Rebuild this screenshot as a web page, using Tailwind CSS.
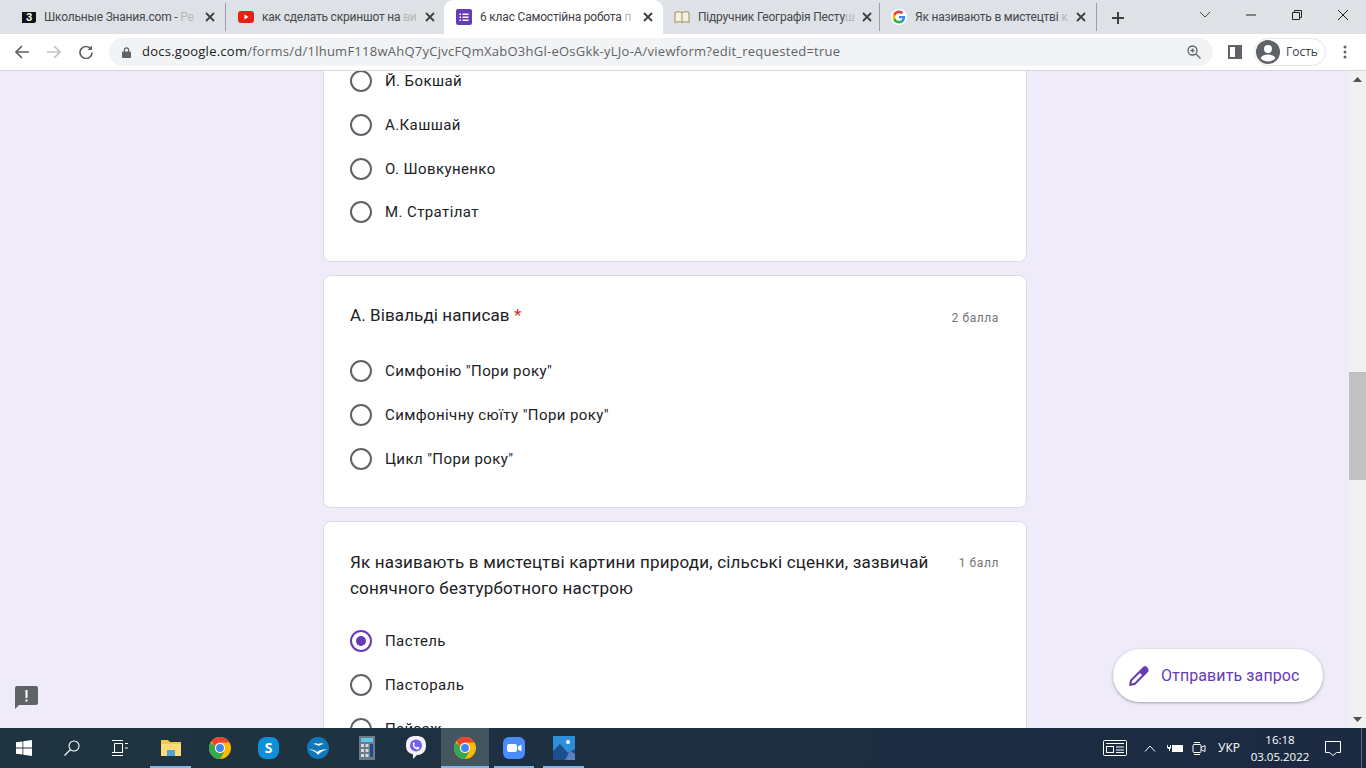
<!DOCTYPE html>
<html lang="uk">
  <head>
    <meta charset="UTF-8" />
    <meta name="viewport" content="width=device-width, initial-scale=1.0" />
    <title>6 клас Самостійна робота</title>
    <script src="https://cdn.jsdelivr.net/npm/@tailwindcss/browser@4"></script>
  </head>
  <body class="h-screen overflow-hidden flex flex-col font-['Roboto',sans-serif] bg-[#f0ebf8]">
    <!-- tab strip -->
    <header class="h-[34px] shrink-0 bg-[#dee1e6] flex items-end pl-[9px] font-['Roboto',sans-serif] text-[12px] tracking-[-0.2px] text-[#45484c]">
      <div class="w-[217px] h-[28px] mb-[3px] flex items-center pl-[12px] pr-[10px] border-r border-[#9aa0a6]">
        <svg class="w-4 h-4 shrink-0" viewBox="0 0 16 16"><path d="M1 3h14v9.500l-1.500 1.500H1z" fill="#111"/><text x="8" y="12" text-anchor="middle" font-size="10" font-weight="700" fill="#fff" font-family="Liberation Sans">З</text></svg>
        <span class="ml-[7px] flex-1 whitespace-nowrap">Школьные Знания.com - <span class="text-[#b4b6ba]">Ре</span></span>
        <svg class="w-[10px] h-[10px] ml-2 shrink-0" viewBox="0 0 10 10" stroke="#3c4043" stroke-width="1.800"><path d="M1 1l8 8M9 1l-8 8"/></svg>
      </div>
      <div class="w-[218px] h-[28px] mb-[3px] flex items-center pl-[12px] pr-[10px] border-r border-transparent">
        <svg class="w-4 h-[12px] shrink-0" viewBox="0 0 16 12"><rect width="16" height="12" rx="3" fill="#e62117"/><path d="M6.500 3.500l4 2.500-4 2.500z" fill="#fff"/></svg>
        <span class="ml-[8px] flex-1 whitespace-nowrap">как сделать скриншот на <span class="text-[#b4b6ba]">ви</span></span>
        <svg class="w-[10px] h-[10px] ml-2 shrink-0" viewBox="0 0 10 10" stroke="#3c4043" stroke-width="1.800"><path d="M1 1l8 8M9 1l-8 8"/></svg>
      </div>
      <div class="w-[219px] h-[34px] bg-white rounded-t-[9px] flex items-center pl-[12px] pr-[10px] text-[#3c4043]">
        <svg class="w-4 h-4 shrink-0" viewBox="0 0 16 16"><rect width="16" height="16" rx="2" fill="#673ab7"/><path d="M3.500 4.500h1.500v1.500H3.500zM6.500 4.500h6v1.500h-6zM3.500 7.500h1.500v1.500H3.500zM6.500 7.500h6v1.500h-6zM3.500 10.500h1.500v1.500H3.500zM6.500 10.500h6v1.500h-6z" fill="#fff"/></svg>
        <span class="ml-[8px] flex-1 whitespace-nowrap">6 клас Самостійна робота <span class="text-[#b4b6ba]">п</span></span>
        <svg class="w-[10px] h-[10px] ml-2 shrink-0" viewBox="0 0 10 10" stroke="#3c4043" stroke-width="1.800"><path d="M1 1l8 8M9 1l-8 8"/></svg>
      </div>
      <div class="w-[217px] h-[28px] mb-[3px] flex items-center pl-[11px] pr-[10px] border-r border-[#9aa0a6]">
        <svg class="w-4 h-4 shrink-0" viewBox="0 0 16 16" fill="#f5f0e0" stroke="#a08c5a"><path d="M1 3.500c2-1 5-1 7 0 2-1 5-1 7 0v10c-2-1-5-1-7 0-2-1-5-1-7 0zM8 3.500v10"/></svg>
        <span class="ml-[8px] flex-1 whitespace-nowrap">Підручник Географія Песту<span class="text-[#b4b6ba]">ш</span></span>
        <svg class="w-[10px] h-[10px] ml-2 shrink-0" viewBox="0 0 10 10" stroke="#3c4043" stroke-width="1.800"><path d="M1 1l8 8M9 1l-8 8"/></svg>
      </div>
      <div class="w-[217px] h-[28px] mb-[3px] flex items-center pl-[11px] pr-[10px] border-r border-[#9aa0a6]">
        <svg class="w-4 h-4 shrink-0" viewBox="-2 -2 20 20"><circle cx="8" cy="8" r="10" fill="#fff"/><path d="M15.700 8.200c0-.6 0-1.100-.1-1.600H8v3h4.400c-.2 1-.8 1.900-1.600 2.400v2h2.600c1.500-1.400 2.300-3.400 2.300-5.800z" fill="#4285f4"/><path d="M8 16c2.200 0 4-.7 5.400-2l-2.600-2c-.7.500-1.700.8-2.800.8-2.100 0-3.900-1.400-4.500-3.300H.8v2.100C2.100 14.200 4.900 16 8 16z" fill="#34a853"/><path d="M3.500 9.500c-.3-1-.3-2 0-3V4.400H.8c-1.100 2.200-1.100 5 0 7.200z" fill="#fbbc05"/><path d="M8 3.200c1.200 0 2.300.4 3.100 1.200l2.300-2.300C12 .8 10.100 0 8 0 4.900 0 2.100 1.800.8 4.400l2.700 2.100C4.100 4.600 5.900 3.200 8 3.200z" fill="#ea4335"/></svg>
        <span class="ml-[8px] flex-1 whitespace-nowrap">Як називають в мистецтві <span class="text-[#b4b6ba]">к</span></span>
        <svg class="w-[10px] h-[10px] ml-2 shrink-0" viewBox="0 0 10 10" stroke="#3c4043" stroke-width="1.800"><path d="M1 1l8 8M9 1l-8 8"/></svg>
      </div>
      <svg class="w-[12px] h-[12px] ml-[15px] mb-[10px] shrink-0" viewBox="0 0 12 12" stroke="#3c4043" stroke-width="2"><path d="M6 0v12M0 6h12"/></svg>
      <div class="ml-auto flex self-start h-[30px] items-center text-[#222]">
        <svg class="w-[46px] h-[12px]" viewBox="0 0 46 12" fill="none" stroke="#444"><path d="M18 3l5 5 5-5"/></svg>
        <svg class="w-[46px] h-[12px]" viewBox="0 0 46 12" fill="none" stroke="#222"><path d="M18 6h10"/></svg>
        <svg class="w-[46px] h-[12px]" viewBox="0 0 46 12" fill="none" stroke="#222"><path d="M18.500 3.500h7v7h-7zM20.500 3.500v-2h7v7h-2"/></svg>
        <svg class="w-[46px] h-[12px]" viewBox="0 0 46 12" fill="none" stroke="#222"><path d="M18 1l10 10M28 1L18 11"/></svg>
      </div>
    </header>

    <!-- toolbar -->
    <nav class="h-[37px] shrink-0 bg-white border-b border-[#d4d6d9] flex items-center font-['Open_Sans',sans-serif]">
      <div class="w-[109px] flex items-center shrink-0 pl-[15px] gap-[18px]">
        <svg class="w-[14px] h-[14px]" viewBox="0 0 14 14" fill="none" stroke="#5f6368" stroke-width="1.700"><path d="M14 7H1.500M7 1L1 7l6 6"/></svg>
        <svg class="w-[14px] h-[14px]" viewBox="0 0 14 14" fill="none" stroke="#bdc1c6" stroke-width="1.700"><path d="M0 7h12.500M7 1l6 6-6 6"/></svg>
        <svg class="w-[14px] h-[14px]" viewBox="0 0 14 14" fill="none" stroke="#5f6368" stroke-width="1.700"><path d="M12 4.200A6 6 0 1 0 13 7.500"/><path d="M13 0.500v4.500H8.500" fill="#5f6368" stroke="none"/></svg>
      </div>
      <div class="w-[1104px] h-[28px] rounded-full bg-[#f1f3f4] flex items-center pl-[13px] pr-[12px]">
        <svg class="w-[9px] h-[11px] shrink-0" viewBox="0 0 9 11" fill="#5f6368"><path d="M1 4.500h.8V3a2.700 2.700 0 0 1 5.400 0v1.500H8a1 1 0 0 1 1 1V10a1 1 0 0 1-1 1H1a1 1 0 0 1-1-1V5.500a1 1 0 0 1 1-1zm2-1.500v1.500h3V3a1.500 1.500 0 0 0-3 0z"/></svg>
        <span class="ml-[11px] text-[13px] tracking-[0.25px] text-[#5f6368] whitespace-nowrap"><span class="text-[#202124]">docs.google.com</span>/forms/d/1lhumF118wAhQ7yCjvcFQmXabO3hGl-eOsGkk-yLJo-A/viewform?edit_requested=true</span>
        <svg class="w-[14px] h-[14px] ml-auto" viewBox="0 0 14 14" fill="none" stroke="#5f6368" stroke-width="1.300"><circle cx="5.500" cy="5.500" r="4.500"/><path d="M9 9l4.500 4.500M3.500 5.500h4M5.500 3.500v4"/></svg>
      </div>
      <svg class="w-[14px] h-[14px] ml-[15px] shrink-0" viewBox="0 0 14 14"><path d="M0 0h14v14H0z" fill="#5f6368"/><path d="M2 2h5v10H2z" fill="#fff"/></svg>
      <div class="ml-[12px] w-[72px] h-[28px] rounded-full border border-[#e4e6e8] flex items-center pl-[1px] shrink-0">
        <svg class="w-[24px] h-[24px]" viewBox="0 0 24 24"><circle cx="12" cy="12" r="12" fill="#5f6368"/><circle cx="12" cy="9" r="4" fill="#fff"/><path d="M4.500 18c1.500-2.500 4.500-3.500 7.500-3.500s6 1 7.500 3.500c-1.800 2.200-4.500 3.500-7.500 3.500S6.300 20.200 4.500 18z" fill="#fff"/></svg>
        <span class="ml-[6px] text-[12px] text-[#3c4043]">Гость</span>
      </div>
      <svg class="w-[4px] h-[14px] ml-[17px] shrink-0" viewBox="0 0 4 14" fill="#5f6368"><circle cx="2" cy="2" r="1.500"/><circle cx="2" cy="7" r="1.500"/><circle cx="2" cy="12" r="1.500"/></svg>
    </nav>

    <!-- page -->
    <div class="relative flex-1 min-h-0 flex overflow-hidden">
      <main class="flex-1 overflow-hidden flex flex-col items-center pl-[1px] text-[#202124]">
        <section class="w-[704px] shrink-0 bg-white border border-[#dadce0] rounded-b-[8px] -mt-[13px] pl-[26px] pb-[28px] text-[15px] tracking-[0.4px]">
          <div class="h-[44px] flex items-center gap-[13px]"><span class="w-[22px] h-[22px] rounded-full border-2 border-[#5f6368]"></span>Й. Бокшай</div>
          <div class="h-[44px] flex items-center gap-[13px]"><span class="w-[22px] h-[22px] rounded-full border-2 border-[#5f6368]"></span>А.Кашшай</div>
          <div class="h-[44px] flex items-center gap-[13px]"><span class="w-[22px] h-[22px] rounded-full border-2 border-[#5f6368]"></span>О. Шовкуненко</div>
          <div class="h-[42px] flex items-center gap-[13px]"><span class="w-[22px] h-[22px] rounded-full border-2 border-[#5f6368]"></span>М. Стратілат</div>
        </section>

        <section class="w-[704px] shrink-0 mt-[13px] bg-white border border-[#dadce0] rounded-[8px] px-[26px] pt-[27px] pb-[26px]">
          <div class="flex justify-between items-center h-[26px] mb-[20px]">
            <h2 class="text-[17px] tracking-[0.1px]">А. Вівальді написав <span class="text-[#d93025]">*</span></h2>
            <span class="text-[12px] tracking-[0.6px] text-[#70757a] mt-[3px] mr-[1px]">2 балла</span>
          </div>
          <div class="text-[15px] tracking-[0.4px]">
            <div class="h-[44px] flex items-center gap-[13px]"><span class="w-[22px] h-[22px] rounded-full border-2 border-[#5f6368]"></span>Симфонію "Пори року"</div>
            <div class="h-[44px] flex items-center gap-[13px]"><span class="w-[22px] h-[22px] rounded-full border-2 border-[#5f6368]"></span>Симфонічну сюїту "Пори року"</div>
            <div class="h-[44px] flex items-center gap-[13px]"><span class="w-[22px] h-[22px] rounded-full border-2 border-[#5f6368]"></span>Цикл "Пори року"</div>
          </div>
        </section>

        <section class="w-[704px] shrink-0 mt-[13px] bg-white border border-[#dadce0] rounded-[8px] px-[26px] pt-[27px] pb-[26px]">
          <div class="flex justify-between items-start mb-[18px]">
            <h2 class="w-[590px] text-[17px] leading-[26px] tracking-[0.2px]">Як називають в мистецтві картини природи, сільські сценки, зазвичай сонячного безтурботного настрою</h2>
            <span class="text-[12px] leading-[26px] tracking-[0.6px] text-[#70757a] mt-[1px] mr-[1px]">1 балл</span>
          </div>
          <div class="text-[15px] tracking-[0.4px]">
            <div class="h-[44px] flex items-center gap-[13px]"><span class="w-[22px] h-[22px] rounded-full border-2 border-[#673ab7] flex items-center justify-center"><span class="w-[10px] h-[10px] rounded-full bg-[#673ab7]"></span></span>Пастель</div>
            <div class="h-[44px] flex items-center gap-[13px]"><span class="w-[22px] h-[22px] rounded-full border-2 border-[#5f6368]"></span>Пастораль</div>
            <div class="h-[44px] flex items-center gap-[13px]"><span class="w-[22px] h-[22px] rounded-full border-2 border-[#5f6368]"></span>Пейзаж</div>
          </div>
        </section>
      </main>

      <!-- scrollbar -->
      <aside class="w-[17px] shrink-0 bg-[#f1f1f1] flex flex-col items-center">
        <svg class="w-[9px] h-[5px] mt-[6px] shrink-0" viewBox="0 0 9 5" fill="#505050"><path d="M4.500 0l4.500 5H0z"/></svg>
        <div class="w-full h-[108px] mt-[290px] bg-[#c1c1c1] shrink-0"></div>
        <svg class="w-[9px] h-[5px] mt-auto mb-[6px] shrink-0" viewBox="0 0 9 5" fill="#505050"><path d="M0 0h9L4.500 5z"/></svg>
      </aside>

      <!-- report button and floating action -->
      <svg class="absolute left-[15px] top-[615px] w-[23px] h-[23px]" viewBox="0 0 23 23" fill="#5f6368"><path d="M2 0h19a2 2 0 0 1 2 2v15a2 2 0 0 1-2 2H4l-4 4V2a2 2 0 0 1 2-2z"/><path d="M10.500 4h2v8h-2zM10.500 13.500h2v2h-2z" fill="#fff"/></svg>
      <button class="absolute left-[1113px] top-[578px] w-[210px] h-[53px] rounded-full bg-white shadow-[0_1px_3px_rgba(60,64,67,0.45)] flex items-center pl-[16px] text-[#673ab7]">
        <svg class="w-[20px] h-[20px] shrink-0" viewBox="0 0 20 20"><path d="M0 20l1-6L13.500 1.500c1.500-2 3.500-2 5 0s1.500 3.500 0 5L6 19z" fill="#673ab7"/><path d="M2.500 17.500l.6-2.800L11 7l2 2-7.500 7.800z" fill="#fff"/></svg>
        <span class="ml-[12px] text-[16px] tracking-[0.1px] whitespace-nowrap">Отправить запрос</span>
      </button>
    </div>

    <!-- windows taskbar -->
    <footer class="h-[40px] shrink-0 flex items-center bg-gradient-to-r from-[#1f3440] to-[#1b2a42] text-white font-['Open_Sans',sans-serif]">
      <div class="w-[48px] h-full flex items-center justify-center">
        <svg class="w-[16px] h-[16px]" viewBox="0 0 16 16" fill="#fff"><path d="M0 2.300l6.500-.9v6.200H0zM7.300 1.300L16 0v7.600H7.300zM0 8.400h6.500v6.200L0 13.700zM7.300 8.400H16V16l-8.700-1.200z"/></svg>
      </div>
      <div class="w-[48px] h-full flex items-center justify-center">
        <svg class="w-[16px] h-[16px]" viewBox="0 0 16 16" fill="none" stroke="#fff" stroke-width="1.100"><circle cx="10" cy="6" r="5"/><path d="M6.500 9.500L.5 15.500"/></svg>
      </div>
      <div class="w-[48px] h-full flex items-center justify-center">
        <svg class="w-[16px] h-[16px]" viewBox="0 0 16 16" fill="none" stroke="#fff"><path d="M0 .500h11M0 15.500h11M0 12.500h11M2.500 3.500h8v9h-8zM13 3.500h3M13 8h3"/></svg>
      </div>
      <div class="w-[49px] h-full flex items-center justify-center relative ml-[2px]">
        <svg class="w-[20px] h-[18px]" viewBox="0 0 20 18"><path d="M0 1h7l2 2h11v14H0z" fill="#f4c745"/><path d="M0 5h20v12H0z" fill="#fbdc7a"/><path d="M6 11h8v6H6z" fill="#4f9fd8"/></svg>
        <span class="absolute bottom-0 inset-x-[4px] h-[2px] bg-[#7db8e8]"></span>
      </div>
      <div class="w-[49px] h-full flex items-center justify-center">
        <svg class="w-[22px] h-[22px]" viewBox="0 0 24 24"><circle cx="12" cy="12" r="12" fill="#fbbc05"/><path d="M12 0a12 12 0 0 1 10.400 6H12a6 6 0 0 0-5.700 4L2.600 4.400A12 12 0 0 1 12 0z" fill="#ea4335"/><path d="M1.600 6A12 12 0 0 0 12 24l5-8.800a6 6 0 0 1-10.500-5z" fill="#34a853"/><circle cx="12" cy="12" r="5.500" fill="#fff"/><circle cx="12" cy="12" r="4.300" fill="#4285f4"/></svg>
      </div>
      <div class="w-[49px] h-full flex items-center justify-center">
        <span class="w-[21px] h-[22px] rounded-[8px] bg-[#0d8fd8] flex items-center justify-center text-[14px] font-bold leading-none">S</span>
      </div>
      <div class="w-[49px] h-full flex items-center justify-center">
        <svg class="w-[22px] h-[22px]" viewBox="0 0 22 22"><circle cx="11" cy="11" r="11" fill="#1177bb"/><path d="M2 13c3-1 6 0 8 2 2-2 6-3 10-2-3 0-7 2-9 5-2-3-5-5-9-5zM6 7c2-1 4-1 5 0 2-1 4-1 6 0-2 0-4 1-5 2-2-1-4-2-6-2z" fill="#fff"/></svg>
      </div>
      <div class="w-[49px] h-full flex items-center justify-center">
        <svg class="w-[16px] h-[24px]" viewBox="0 0 16 24"><rect width="16" height="24" fill="#6b7b88"/><rect x="2" y="2" width="12" height="4" fill="#62c6ee"/><path d="M2 8h3v3H2zM6.500 8h3v3h-3zM2 13h3v3H2zM6.500 13h3v3h-3zM2 18h3v3H2zM6.500 18h3v3h-3z" fill="#d4dade"/><rect x="11" y="8" width="3" height="13" fill="#1f4b8f"/></svg>
      </div>
      <div class="w-[50px] h-full flex items-center justify-center">
        <svg class="w-[20px] h-[24px]" viewBox="0 0 20 24"><path d="M10 0c6 0 10 2 10 9.500S15 19 11 19l-4 4v-4.500C2 17 0 14 0 9.500 0 2 4 0 10 0z" fill="#f5f3fa"/><circle cx="10" cy="9.500" r="6" fill="#7360f2"/><path d="M7.500 6l1.500 1.500-1 1.500c.5 1 1.500 2 2.500 2.500l1.500-1 1.500 1.500c-1 2-3 1.500-4.500.5S6 9 7.500 6z" fill="#fff"/></svg>
      </div>
      <div class="w-[48px] h-full flex items-center justify-center relative bg-[#45555f]">
        <svg class="w-[22px] h-[22px]" viewBox="0 0 24 24"><circle cx="12" cy="12" r="12" fill="#fbbc05"/><path d="M12 0a12 12 0 0 1 10.400 6H12a6 6 0 0 0-5.700 4L2.600 4.400A12 12 0 0 1 12 0z" fill="#ea4335"/><path d="M1.600 6A12 12 0 0 0 12 24l5-8.800a6 6 0 0 1-10.500-5z" fill="#34a853"/><circle cx="12" cy="12" r="5.500" fill="#fff"/><circle cx="12" cy="12" r="4.300" fill="#4285f4"/></svg>
        <span class="absolute bottom-0 inset-x-0 h-[2px] bg-[#7db8e8]"></span>
      </div>
      <div class="w-[50px] h-full flex items-center justify-center relative">
        <svg class="w-[22px] h-[22px]" viewBox="0 0 22 22"><rect width="22" height="22" rx="6" fill="#4a8cff"/><rect x="4" y="7" width="10" height="8" rx="2" fill="#fff"/><path d="M15 9.500l3.500-2v7l-3.500-2z" fill="#fff"/></svg>
        <span class="absolute bottom-0 inset-x-[5px] h-[2px] bg-[#7db8e8]"></span>
      </div>
      <div class="w-[49px] h-full flex items-center justify-center relative">
        <svg class="w-[22px] h-[24px]" viewBox="0 0 22 24"><rect width="22" height="24" fill="#2d8fd8"/><circle cx="15" cy="6" r="2" fill="#fff"/><path d="M0 24V15l7-7 8 9 7-4v11z" fill="#1d4f8c"/><path d="M12 24l5-9 5 3v6z" fill="#5d7ec2"/></svg>
        <span class="absolute bottom-0 inset-x-[4px] h-[2px] bg-[#7db8e8]"></span>
      </div>

      <div class="ml-auto flex items-center h-full shrink-0">
        <svg class="w-[24px] h-[16px]" viewBox="0 0 24 16" fill="none" stroke="#fff"><rect x=".5" y=".5" width="23" height="15" rx="1"/><path d="M3 3.500h18"/><rect x="3.500" y="6.500" width="7" height="6"/><path d="M13 7h8M13 10h8M13 12.500h8"/></svg>
        <svg class="w-[12px] h-[7px] ml-[17px]" viewBox="0 0 12 7" fill="none" stroke="#fff"><path d="M1 6.500L6 1l5 5.500"/></svg>
        <svg class="w-[16px] h-[10px] ml-[11px]" viewBox="0 0 16 10" fill="#fff"><path d="M5 2h11v7H5zM0 2h1v2h2V2h1v3l-1 1v2H2V6L0 5z"/></svg>
        <svg class="w-[14px] h-[15px] ml-[9px]" viewBox="0 0 14 15" fill="none" stroke="#fff"><path d="M2 1.500h6M2 13.500h6"/><rect x="1" y="3.500" width="8" height="8" rx="1"/><path d="M9 6.500l4-2v6l-4-2"/></svg>
        <span class="ml-[12px] text-[12px]">УКР</span>
        <div class="ml-[15px] w-[50px] text-center text-[11.5px] leading-[17px] whitespace-nowrap flex flex-col items-center"><span>16:18</span><span>03.05.2022</span></div>
        <div class="w-[56px] flex justify-center">
          <svg class="w-[16px] h-[15px]" viewBox="0 0 16 15" fill="none" stroke="#fff"><path d="M.5.500h15v11h-4l-3.500 3-3.500-3h-4z"/></svg>
        </div>
        <span class="w-[5px] h-full border-l border-[#5a6675]"></span>
      </div>
    </footer>
  </body>
</html>
